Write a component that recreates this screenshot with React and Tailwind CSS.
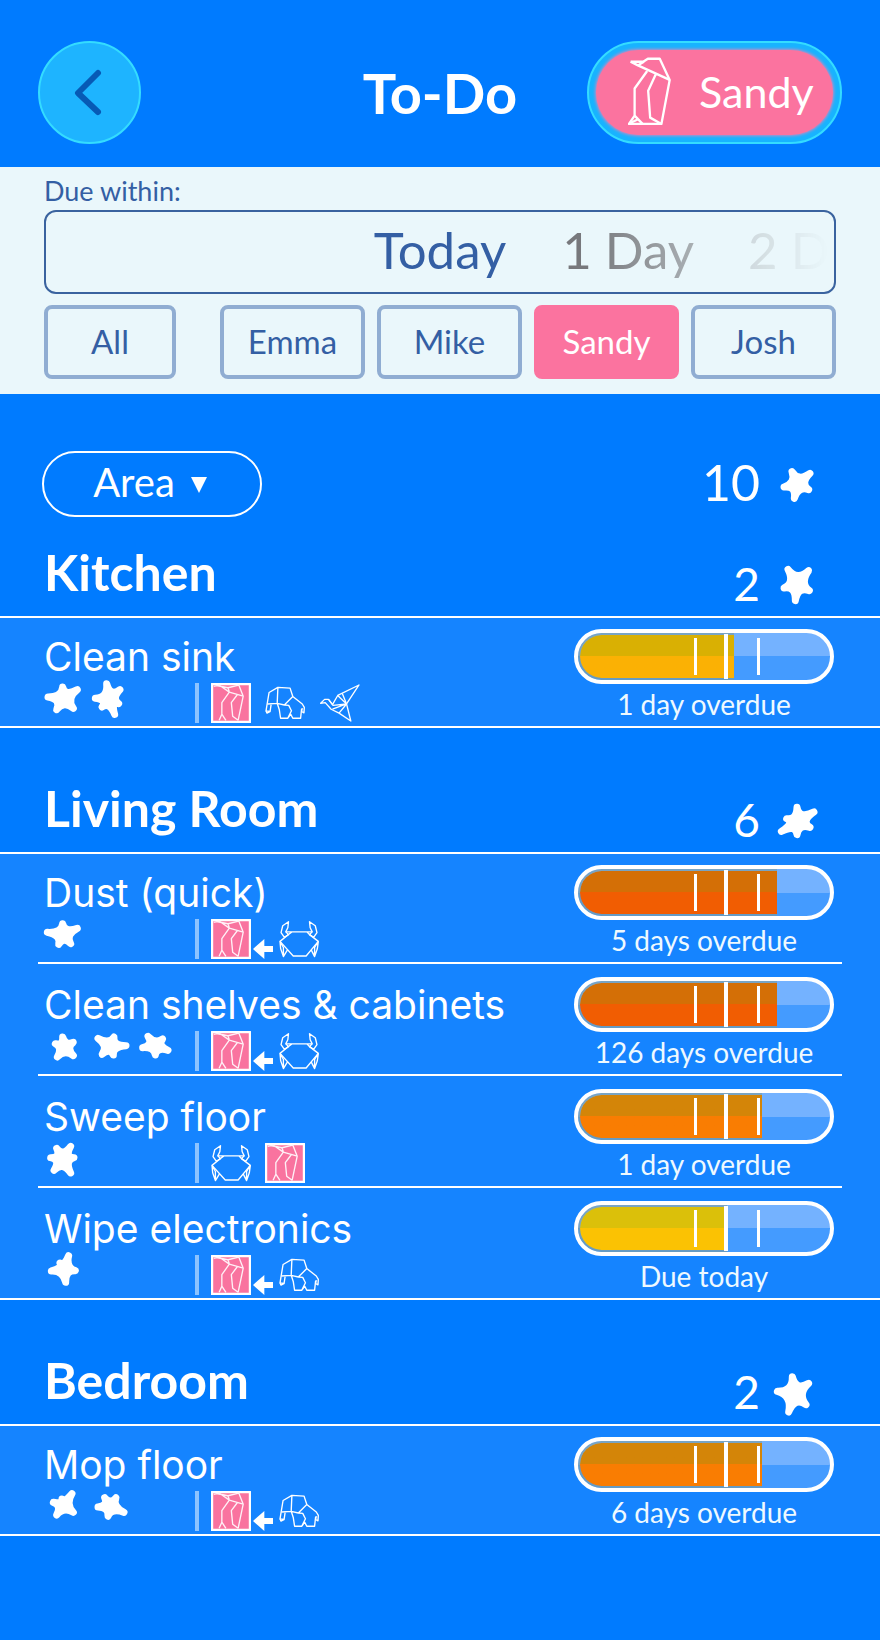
import React, { useState } from 'react';
import clsx from 'clsx';

const STARS = {
  a: [[62, 30], [106, 38], [94, 94], [44, 98], [18, 60]],
  b: [[56, 20], [96, 38], [92, 80], [80, 112], [42, 90], [22, 64]],
  c: [[62, 32], [106, 46], [86, 92], [50, 94], [16, 58]],
  d: [[62, 36], [94, 52], [94, 92], [46, 96], [40, 56]],
  e: [[30, 40], [78, 36], [114, 62], [76, 90], [42, 88]],
  f: [[42, 34], [86, 42], [102, 76], [64, 90], [26, 68]],
  g: [[44, 34], [86, 28], [96, 62], [86, 108], [36, 100], [26, 62]],
  h: [[80, 20], [100, 65], [71, 100], [28, 66], [54, 42]],
  i: [[90, 26], [94, 82], [44, 90], [34, 52], [60, 42]],
  j: [[50, 38], [84, 38], [108, 82], [60, 94], [30, 66]],
  total: [[48, 26], [102, 31], [98, 80], [55, 106], [24, 72]],
  kitchen: [[36, 16], [98, 20], [100, 80], [58, 110], [24, 72]],
  living: [[63, 22], [114, 36], [102, 82], [63, 104], [16, 94], [32, 56]],
  bedroom: [[49, 14], [98, 34], [90, 98], [38, 120], [4, 58]],
};

const SECTIONS = [
  {
    name: 'Kitchen',
    points: 2,
    star: 'kitchen',
    tasks: [
      { name: 'Clean sink', stars: ['a', 'b'], people: ['penguin', 'elephant', 'bird'], due: '1 day overdue', level: 62, fill: 'from-[#d9b003] to-[#fbb104]' },
    ],
  },
  {
    name: 'Living Room',
    points: 6,
    star: 'living',
    tasks: [
      { name: 'Dust (quick)', stars: ['c'], people: ['penguin', 'arrow', 'crab'], due: '5 days overdue', level: 79, fill: 'from-[#d46f06] to-[#f15d02]' },
      { name: 'Clean shelves & cabinets', stars: ['d', 'e', 'f'], people: ['penguin', 'arrow', 'crab'], due: '126 days overdue', level: 79, fill: 'from-[#d46f06] to-[#f15d02]' },
      { name: 'Sweep floor', stars: ['g'], people: ['crab', 'penguin'], due: '1 day overdue', level: 73, fill: 'from-[#d48508] to-[#f97d02]' },
      { name: 'Wipe electronics', stars: ['h'], people: ['penguin', 'arrow', 'elephant'], due: 'Due today', level: 59, fill: 'from-[#dbc00a] to-[#fbc203]' },
    ],
  },
  {
    name: 'Bedroom',
    points: 2,
    star: 'bedroom',
    tasks: [
      { name: 'Mop floor', stars: ['i', 'j'], people: ['penguin', 'arrow', 'elephant'], due: '6 days overdue', level: 73, fill: 'from-[#d48508] to-[#f97d02]' },
    ],
  },
];

// curves between neighbouring tips are pulled towards the middle of the star
const starPath = (tips) => {
  const cx = tips.reduce((sum, p) => sum + p[0], 0) / tips.length;
  const cy = tips.reduce((sum, p) => sum + p[1], 0) / tips.length;
  const pull = (a, b) => {
    const mx = (a[0] + b[0]) / 2;
    const my = (a[1] + b[1]) / 2;
    return `${cx + (mx - cx) * 0.2} ${cy + (my - cy) * 0.2}`;
  };
  const curves = tips.map((p, i) => {
    const next = tips[(i + 1) % tips.length];
    return `Q${pull(p, next)} ${next[0]} ${next[1]}`;
  });
  return `M${tips[0][0]} ${tips[0][1]} ${curves.join(' ')}Z`;
};

const Star = ({ shape }) => (
  <svg viewBox="0 0 126 126" className="w-[42px] h-[42px] shrink-0 overflow-visible" aria-hidden="true">
    <path d={starPath(STARS[shape])} fill="white" stroke="white" strokeWidth="21" strokeLinejoin="round" />
  </svg>
);

const Penguin = () => (
  <svg viewBox="54 54 130 206" className="w-[43px] h-[69px] shrink-0" fill="none" stroke="white" strokeWidth="7" strokeLinejoin="round" aria-hidden="true">
    <path d="M62 67H100L114 58H150L180 122L155 255H57L74 230V148L112 95" />
    <path d="M62 67L84 78L180 122M84 78L102 67M138 105L115 155L121 236L155 255M74 230L98 255M58 254L86 240" />
  </svg>
);

const PenguinBadge = () => (
  <svg viewBox="0 0 118 118" className="w-10 h-10 shrink-0" fill="none" strokeLinejoin="round" aria-hidden="true">
    <rect x="3" y="3" width="112" height="112" fill="#f9739f" stroke="white" strokeWidth="7" />
    <path d="M8 10L24 6L54 27L95 39M20 8L50 14L54 26M50 14L82 6L95 39L80 110M54 27L32 58V92L44 110M78 34L60 58L64 98L80 110M32 92L24 110" stroke="#fff0f6" strokeWidth="4" />
  </svg>
);

const Crab = () => (
  <svg viewBox="0 0 118 118" className="w-10 h-10 shrink-0" fill="none" stroke="white" strokeWidth="4" strokeLinejoin="round" aria-hidden="true">
    <path d="M28 8L11 20L6 40L16 54L28 46L20 38L26 26ZM90 8L107 20L112 40L102 54L90 46L98 38L92 26Z" />
    <path d="M20 38H98M38 38L28 46L3 66L42 109H80L116 66L90 46L82 38" />
    <path d="M3 66L5 88L13 111L25 91M3 66L13 84L13 111M116 66L113 88L105 111L95 91M116 66L105 84V111" />
  </svg>
);

const Elephant = () => (
  <svg viewBox="0 0 118 118" className="w-10 h-10 shrink-0" fill="none" stroke="white" strokeWidth="4" strokeLinejoin="round" aria-hidden="true">
    <path d="M18 64L15 84L3 82L7 58L12 28L38 13L74 15L82 40L110 62L116 72L115 88L108 84L110 74" />
    <path d="M38 13L36 60L7 62M36 60L57 65L82 40M36 60L42 78L46 104H67L78 82L70 66L57 65M67 104L76 92L82 104H105L108 76M3 82L6 89L15 84" />
  </svg>
);

const Bird = () => (
  <svg viewBox="2 2 126 122" className="w-[42px] h-10 shrink-0" fill="none" stroke="white" strokeWidth="4" strokeLinejoin="round" aria-hidden="true">
    <path d="M123 8L58 40L42 68L30 52L18 52L6 64L20 62L38 82L62 94L98 118L85 66Z" />
    <path d="M58 40L85 66L42 82M30 52L44 70L85 66L62 94M85 66L72 34" />
  </svg>
);

const Arrow = () => (
  <svg viewBox="0 0 60 60" className="w-5 h-5 mr-1 shrink-0 self-end" fill="white" aria-hidden="true">
    <path d="M0 30L34 0V21H60V39H34V60Z" />
  </svg>
);

const PEOPLE = { penguin: PenguinBadge, crab: Crab, elephant: Elephant, bird: Bird, arrow: Arrow };

const Gauge = ({ level, fill, label }) => (
  <div
    role="meter"
    aria-label={label}
    aria-valuenow={level}
    className="relative w-full h-[55px] rounded-full border-4 border-white overflow-hidden bg-linear-to-b from-[#74b2ff] from-50% to-[#449bff] to-50%"
  >
    <div
      className={clsx('h-full border-2 border-r-0 border-[#7e9c9c]/60 rounded-l-full bg-clip-padding bg-linear-to-b from-50% to-50%', fill)}
      style={{ width: `${level}%` }}
    />
    <span className="absolute inset-y-[5px] left-[46%] w-[3px] bg-white" />
    <span className="absolute inset-y-px left-[58%] w-1 bg-white" />
    <span className="absolute inset-y-[5px] left-[71%] w-[3px] bg-white" />
  </div>
);

const Task = ({ task, first }) => (
  <li className={clsx('flex justify-between pl-1.5 pr-2', first ? 'h-[108px] pt-[11px]' : 'h-28 pt-[13px] border-t-2 border-white')}>
    <div className="min-w-0">
      <h3 className="h-12 pt-1 font-[Inter] text-[39px] leading-[48px] whitespace-nowrap">{task.name}</h3>
      <div className="flex">
        <div className="flex gap-1 w-[153px] -ml-0.5">
          {task.stars.map((shape) => <Star key={shape} shape={shape} />)}
        </div>
        <div className="flex items-center h-10 mt-1.5">
          <span className="w-1 h-10 mr-3 bg-[#8cc3ff]" />
          <div className={clsx('flex h-10', task.people.includes('arrow') ? 'gap-0.5' : 'gap-3.5')}>
            {task.people.map((person) => {
              const Icon = PEOPLE[person];
              return <Icon key={person} />;
            })}
          </div>
        </div>
      </div>
    </div>
    <div className="w-[260px] shrink-0 text-center">
      <Gauge level={task.level} fill={task.fill} label={task.name} />
      <p className="pt-0.5 text-[28px] leading-9 text-[#eef9ff]">{task.due}</p>
    </div>
  </li>
);

const Section = ({ section, first }) => (
  <section>
    <div className={clsx('flex items-end justify-between pl-11 pr-[62px]', first ? 'h-[99px]' : 'h-[124px]')}>
      <h2 className="pb-4 text-[50px] leading-[56px] font-bold">{section.name}</h2>
      <div className="flex items-center gap-4 pb-1.5">
        <span className="pb-0.5 text-[46px] leading-[48px]">{section.points}</span>
        <Star shape={section.star} />
      </div>
    </div>
    <ul className="px-[38px] bg-[#1584ff] border-y-2 border-white">
      {section.tasks.map((task, i) => <Task key={task.name} task={task} first={i === 0} />)}
    </ul>
  </section>
);

const FilterButton = ({ name, active, onClick }) => (
  <button
    type="button"
    aria-pressed={active}
    onClick={onClick}
    className={clsx(
      'flex-1 h-[74px] pb-0.5 rounded-lg border-4 text-[33px] leading-10',
      active ? 'bg-[#fb739f] border-[#fb739f] text-white' : 'border-[#90add2] text-[#345fa4]',
    )}
  >
    {name}
  </button>
);

const App = () => {
  const [person, setPerson] = useState('Sandy');

  return (
    <main className="min-h-screen bg-[#007bff] text-white font-[Lato,'Open_Sans',sans-serif]">
      <header className="grid grid-cols-[1fr_auto_1fr] items-center h-[167px] px-[38px] pt-[18px]">
        <button type="button" aria-label="Back" className="grid place-items-center w-[103px] h-[103px] pr-1 rounded-full bg-[#1eb4ff] border-2 border-[#34dcff]">
          <svg viewBox="0 0 30 48" className="w-[30px] h-12" fill="none" stroke="#075ab5" strokeWidth="6" strokeLinecap="round" strokeLinejoin="round">
            <path d="M25 4L5 24L25 43" />
          </svg>
        </button>
        <h1 className="text-[56px] leading-[64px] font-bold">To-Do</h1>
        <button type="button" className="justify-self-end w-[255px] h-[103px] p-[7px] rounded-full bg-[#18b3ff] border-2 border-[#34dcff]">
          <span className="flex items-center gap-7 h-full pl-8 pb-0.5 rounded-full bg-[#fb739f] shadow-[0_0_3px_1px_#c58bc4] text-[43px] leading-[52px]">
            <Penguin />
            Sandy
          </span>
        </button>
      </header>

      <div className="h-[227px] px-11 pt-2 bg-[#eaf7fb] text-[#345fa4]">
        <p className="h-[35px] text-[27px] leading-8">Due within:</p>
        <div className="grid grid-cols-[1fr_auto_1fr] items-center h-[84px] border-2 border-[#3a639f] rounded-xl text-[51px] leading-[60px] whitespace-nowrap">
          <span />
          <button type="button" className="pb-1">Today</button>
          <div className="flex gap-[54px] pl-14 pb-1 overflow-hidden text-[#77787c] [mask-image:linear-gradient(to_right,black_25%,rgb(0_0_0/0.5)_62%,rgb(0_0_0/0.22)_75%,transparent_98%)]">
            <button type="button" className="shrink-0">1 Day</button>
            <button type="button" className="shrink-0">2 D</button>
          </div>
        </div>
        <div className="flex pt-[11px]">
          <div className="flex w-[132px] mr-11">
            <FilterButton name="All" active={person === 'All'} onClick={() => setPerson('All')} />
          </div>
          <div className="flex flex-1 gap-3">
            {['Emma', 'Mike', 'Sandy', 'Josh'].map((name) => (
              <FilterButton key={name} name={name} active={person === name} onClick={() => setPerson(name)} />
            ))}
          </div>
        </div>
      </div>

      <div className="flex items-center justify-between pt-[57px] pl-[42px] pr-[62px]">
        <button type="button" className="flex items-center justify-center gap-4 w-[220px] h-[66px] pb-1 pr-1 rounded-full border-2 border-white text-[40px] leading-[48px]">
          Area
          <svg viewBox="0 0 16 16" className="w-4 h-4 mt-1.5" fill="white" aria-hidden="true">
            <path d="M0 0H16L8 16Z" />
          </svg>
        </button>
        <div className="flex items-center gap-4">
          <span className="pb-1 text-[50px] leading-[56px]">10</span>
          <Star shape="total" />
        </div>
      </div>

      {SECTIONS.map((section, i) => <Section key={section.name} section={section} first={i === 0} />)}
    </main>
  );
};

export default App;
